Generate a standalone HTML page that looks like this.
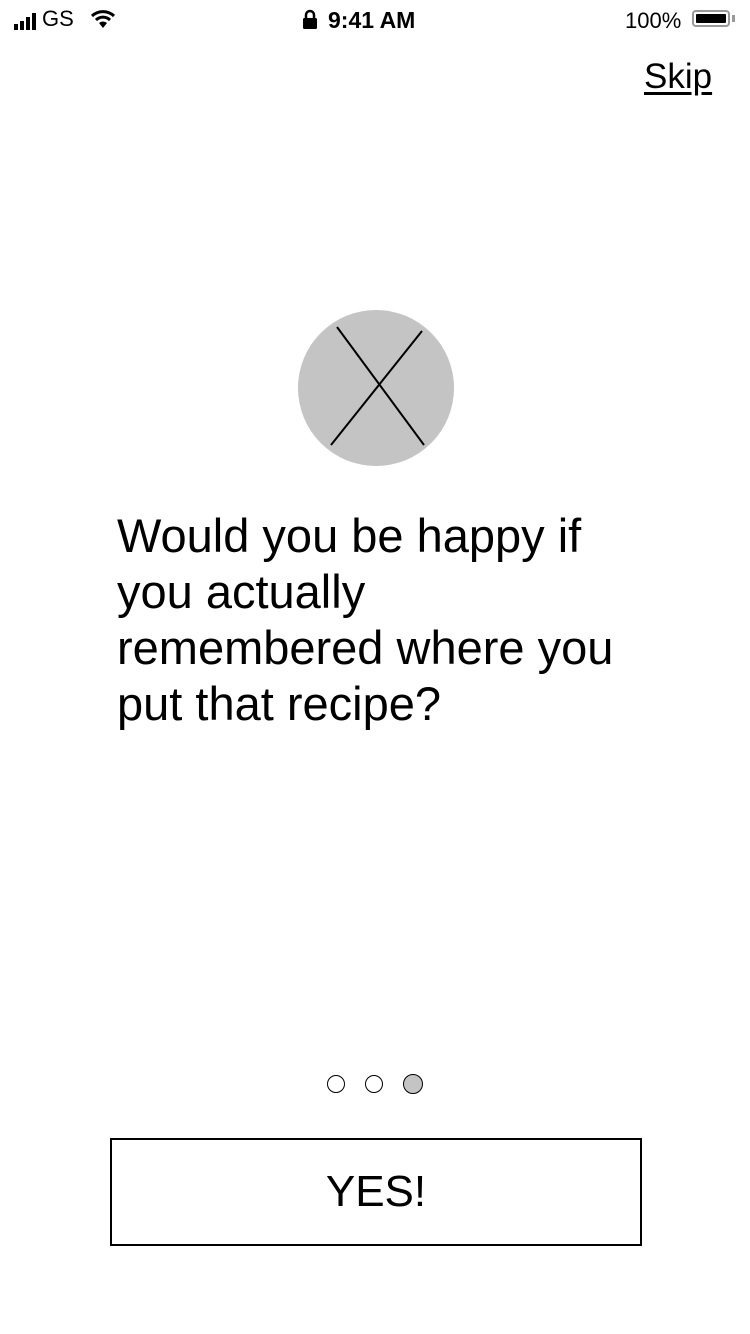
<!DOCTYPE html>
<html><head><style>
body{margin:0;width:750px;height:1334px;background:#fff;position:relative;font-family:"Liberation Sans",sans-serif;overflow:hidden;color:#000}
.a{position:absolute}
</style></head><body>
<div class="a" style="left:14px;top:8px;font-size:22px;display:flex;align-items:flex-end;gap:2px">
<span style="display:inline-block;width:4px;height:6px;background:#000"></span>
<span style="display:inline-block;width:4px;height:9px;background:#000"></span>
<span style="display:inline-block;width:4px;height:13px;background:#000"></span>
<span style="display:inline-block;width:4px;height:17px;background:#000;margin-right:4px"></span>
<span style="line-height:22px">GS</span>
</div>
<svg class="a" style="left:90px;top:9px" width="26" height="20" viewBox="0 0 26 20"><path d="M2 7 A16 16 0 0 1 24 7" stroke="#000" stroke-width="3" fill="none"/><path d="M6 11 A10 10 0 0 1 20 11" stroke="#000" stroke-width="3" fill="none"/><path d="M13 19 L9 14 A6 6 0 0 1 17 14 Z" fill="#000"/></svg>
<svg class="a" style="left:302px;top:9px" width="16" height="21" viewBox="0 0 16 21"><path d="M4 9V6a4 4 0 0 1 8 0v3" stroke="#000" stroke-width="2.5" fill="none"/><rect x="1" y="9" width="14" height="11" rx="1.5" fill="#000"/></svg>
<div class="a" style="left:328px;top:6px;font-size:23px;font-weight:bold;line-height:28px">9:41 AM</div>
<div class="a" style="left:625px;top:7px;font-size:22px;line-height:28px">100%</div>
<div class="a" style="left:692px;top:10px;width:38px;height:17px;border:2px solid #999;border-radius:4px;box-sizing:border-box;padding:2px"><div style="width:100%;height:100%;background:#000;border-radius:1px"></div></div>
<div class="a" style="left:732px;top:15px;width:3px;height:7px;background:#999"></div>
<div class="a" style="left:644px;top:56px;font-size:35px;text-decoration:underline;text-underline-offset:4px;line-height:42px">Skip</div>
<svg class="a" style="left:298px;top:310px" width="156" height="156"><circle cx="78" cy="78" r="78" fill="#c4c4c4"/><line x1="39" y1="17" x2="126" y2="135" stroke="#000" stroke-width="2"/><line x1="124" y1="21" x2="33" y2="135" stroke="#000" stroke-width="2"/></svg>
<div class="a" style="left:117px;top:508px;font-size:47px;line-height:56px;white-space:nowrap">Would you be happy if<br>you actually<br>remembered where you<br>put that recipe?</div>
<div class="a" style="left:327px;top:1075px;width:18px;height:18px;border:1.5px solid #000;border-radius:50%;box-sizing:border-box"></div>
<div class="a" style="left:365px;top:1075px;width:18px;height:18px;border:1.5px solid #000;border-radius:50%;box-sizing:border-box"></div>
<div class="a" style="left:403px;top:1074px;width:20px;height:20px;border:1.5px solid #000;border-radius:50%;box-sizing:border-box;background:#c4c4c4"></div>
<div class="a" style="left:110px;top:1138px;width:532px;height:108px;border:2px solid #000;box-sizing:border-box;display:flex;align-items:center;justify-content:center;font-size:44px">YES!</div>
</body></html>
